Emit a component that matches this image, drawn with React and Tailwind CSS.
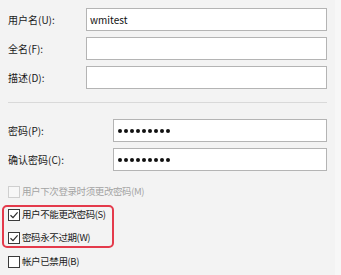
import React from 'react';

const font = { fontFamily: '"Noto Sans CJK SC", "Noto Sans", sans-serif' };

const TextRow = ({ label, value, labelWidth }) => (
  <div className="flex items-center h-[23px]">
    <div className={`${labelWidth} text-[10px] text-[#1a1a1a] leading-none whitespace-nowrap`}>{label}</div>
    <div className="flex-1 h-[23px] bg-white border border-[#b4b4b4] flex items-center pl-[3px] text-[10px] text-[#111]">
      {value}
    </div>
  </div>
);

const PasswordRow = ({ label }) => (
  <div className="flex items-center h-[23px]">
    <div className="w-[105px] text-[10px] text-[#1a1a1a] leading-none whitespace-nowrap">{label}</div>
    <div className="flex-1 h-[23px] bg-white border border-[#b4b4b4] flex items-center pl-[4px] gap-[2px]">
      {[0, 1, 2, 3, 4, 5, 6, 7, 8].map((i) => (
        <span key={i} className="w-[4px] h-[4px] rounded-full bg-[#111]" />
      ))}
    </div>
  </div>
);

const Check = ({ label, checked, disabled }) => (
  <div className="flex items-center h-[16px]">
    <span
      className={`w-[12px] h-[12px] shrink-0 border flex items-center justify-center ${
        disabled ? 'border-[#cfcfcf] bg-[#f7f7f7]' : 'border-[#3a3a3a] bg-white'
      }`}
    >
      {checked && (
        <svg width="10" height="10" viewBox="0 0 10 10">
          <path d="M1.5 5.2 L4 7.6 L8.6 2.4" fill="none" stroke="#2b2b2b" strokeWidth="1.2" />
        </svg>
      )}
    </span>
    <span
      className={`ml-[2px] text-[9.5px] tracking-[-0.4px] leading-none whitespace-nowrap ${
        disabled ? 'text-[#a3a3a3]' : 'text-[#1a1a1a]'
      }`}
    >
      {label}
    </span>
  </div>
);

const App = () => {
  return (
    <div className="w-[341px] h-[275px] bg-[#f3f3f3] flex overflow-hidden" style={font}>
      <div className="w-[335px] pl-[8px] pr-[8px] pt-[8px] flex flex-col">
        <div className="flex flex-col gap-[6px]">
          <TextRow label="用户名(U):" value="wmitest" labelWidth="w-[78px]" />
          <TextRow label="全名(F):" value="" labelWidth="w-[78px]" />
          <TextRow label="描述(D):" value="" labelWidth="w-[78px]" />
        </div>

        <div className="mt-[13px] border-t border-[#d9d9d9] h-0" />

        <div className="mt-[16px] flex flex-col gap-[6px]">
          <PasswordRow label="密码(P):" />
          <PasswordRow label="确认密码(C):" />
        </div>

        <div className="mt-[13px]">
          <Check label="用户下次登录时须更改密码(M)" disabled />
        </div>

        <div className="mt-[5px] ml-[-6px] w-[112px] border-2 border-[#e43a4b] rounded-[5px] pl-[4px] flex flex-col gap-[7px]">
          <Check label="用户不能更改密码(S)" checked />
          <Check label="密码永不过期(W)" checked />
        </div>

        <div className="mt-[6px]">
          <Check label="帐户已禁用(B)" />
        </div>
      </div>
      <div className="flex-1 bg-[#f7f7f7]" />
    </div>
  );
};

export default App;
